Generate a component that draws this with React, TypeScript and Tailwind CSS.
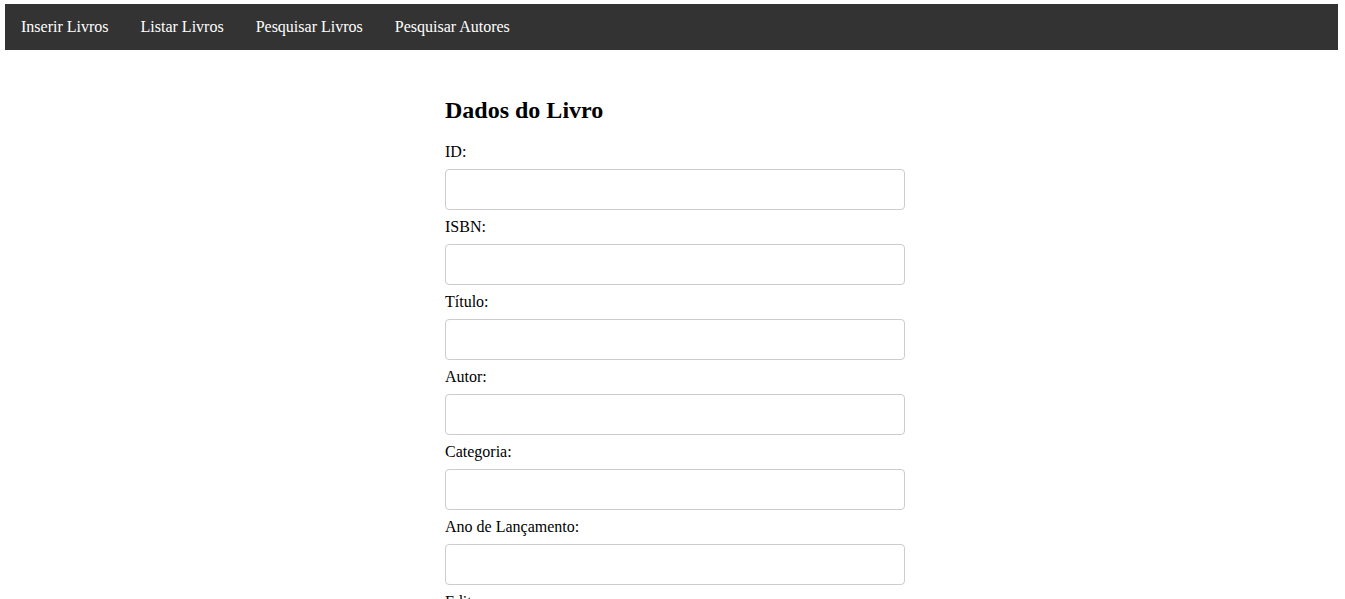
const links = ["Inserir Livros", "Listar Livros", "Pesquisar Livros", "Pesquisar Autores"];

const fields = [
  "ID",
  "ISBN",
  "Título",
  "Autor",
  "Categoria",
  "Ano de Lançamento",
  "Editora",
];

export default function App() {
  return (
    <div className="min-h-screen bg-white pt-[4px] font-['Liberation_Serif','Times_New_Roman',serif] text-[16px] text-black">
      <nav className="ml-[5px] mr-[7px] flex h-[46px] items-center bg-[#333333]">
        {links.map((l) => (
          <a key={l} href="#" className="px-4 leading-[46px] text-white">
            {l}
          </a>
        ))}
      </nav>

      <main className="ml-[5px] flex justify-center">
        <form className="w-[460px] pt-[46px]" onSubmit={(e) => e.preventDefault()}>
          <h2 className="mb-[19px] text-[24px] leading-[28px] font-bold">Dados do Livro</h2>
          {fields.map((f) => (
            <div key={f}>
              <label className="block leading-[18px]">{f}:</label>
              <input
                type="text"
                className="my-2 block h-[41px] w-full rounded-[4px] border border-[#cccccc] px-[10px] outline-none"
              />
            </div>
          ))}
        </form>
      </main>
    </div>
  );
}
